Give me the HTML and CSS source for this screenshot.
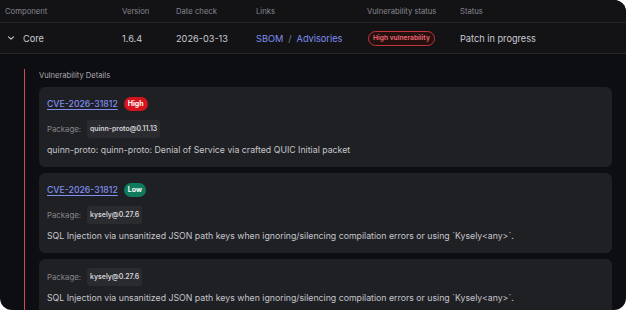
FILE: index.html
```html
<!DOCTYPE html>
<html lang="en">
<head>
  <meta charset="UTF-8">
  <title>Components</title>
  <link rel="stylesheet" href="styles.css">
</head>
<body>
  <section class="frame">
    <div class="grid head">
      <div>Component</div>
      <div>Version</div>
      <div>Date check</div>
      <div>Links</div>
      <div>Vulnerability status</div>
      <div>Status</div>
    </div>

    <div class="grid row">
      <div class="name">
        <svg class="chev" width="8" height="8" viewBox="0 0 8 8"><path d="M1.5 2.8 4 5.2 6.5 2.8" fill="none" stroke="#c9c9cf" stroke-width="1.1" stroke-linecap="round" stroke-linejoin="round"/></svg>
        Core
      </div>
      <div>1.6.4</div>
      <div>2026-03-13</div>
      <div class="links"><a>SBOM</a><span class="sep">/</span><a>Advisories</a></div>
      <div><span class="pill">High vulnerability</span></div>
      <div>Patch in progress</div>
    </div>

    <div class="details">
      <div class="details-inner">
        <div class="details-title">Vulnerability Details</div>

        <div class="card">
          <div class="cve-line">
            <a class="cve">CVE-2026-31812</a>
            <span class="badge high">High</span>
          </div>
          <div class="pkg"><span class="pkg-label">Package:</span><span class="chip">quinn-proto@0.11.13</span></div>
          <p class="desc">quinn-proto: quinn-proto: Denial of Service via crafted QUIC Initial packet</p>
        </div>

        <div class="card">
          <div class="cve-line">
            <a class="cve">CVE-2026-31812</a>
            <span class="badge low">Low</span>
          </div>
          <div class="pkg"><span class="pkg-label">Package:</span><span class="chip">kysely@0.27.6</span></div>
          <p class="desc">SQL Injection via unsanitized JSON path keys when ignoring/silencing compilation errors or using `Kysely&lt;any&gt;`.</p>
        </div>

        <div class="card no-cve">
          <div class="pkg"><span class="pkg-label">Package:</span><span class="chip">kysely@0.27.6</span></div>
          <p class="desc">SQL Injection via unsanitized JSON path keys when ignoring/silencing compilation errors or using `Kysely&lt;any&gt;`.</p>
        </div>
      </div>
    </div>
  </section>
</body>
</html>
```

FILE: styles.css
```css
* {
  padding: 0;
  margin: 0;
  box-sizing: border-box;
}

body {
  background: #ffffff;
  font-family: 'Inter', 'Noto Sans', sans-serif;
}

.frame {
  width: 626px;
  height: 310px;
  overflow: hidden;
  background: #0d0e11;
  border-radius: 0 12px 12px 12px;
}

.grid {
  display: grid;
  grid-template-columns: 117px 54px 80px 111px 93px 1fr;
  padding-left: 5px;
  align-items: center;
  background: #131316;
  border-bottom: 1px solid #26272b;
}

.head {
  height: 23px;
  font-size: 7.7px;
  color: #85858c;
}

.row {
  height: 31px;
  font-size: 9.2px;
  color: #cacad0;
}

.name {
  display: flex;
  align-items: center;
  gap: 8px;
  padding-left: 2px;
}

.links a {
  color: #7f8ef0;
}

.links .sep {
  color: #7a7a82;
  margin: 0 5px;
}

.pill {
  display: inline-block;
  border: 1px solid #c2343e;
  border-radius: 8px;
  background: #24100f;
  color: #f06a72;
  font-size: 6.7px;
  font-weight: 600;
  padding: 2px 4px;
  margin-left: 1px;
  line-height: 9px;
}

.details {
  padding: 15px 14px 0 24px;
}

.details-inner {
  border-left: 1px solid #d9465a;
  padding-left: 14px;
  height: 260px;
}

.details-title {
  font-size: 7.6px;
  color: #a9a9b0;
  line-height: 14px;
  margin-bottom: 4px;
}

.card {
  background: #1f2023;
  border-radius: 6px;
  padding: 10px 8px 11px;
  margin-bottom: 6px;
  height: 80px;
}

.card.no-cve {
  padding-top: 9px;
}

.cve-line {
  display: flex;
  align-items: center;
  gap: 6px;
  height: 14px;
  margin-bottom: 9px;
}

.cve {
  font-size: 8.7px;
  font-weight: 500;
  color: #7f8ef0;
  text-decoration: underline;
  text-underline-offset: 2px;
}

.badge {
  font-size: 7px;
  font-weight: 700;
  color: #ffffff;
  border-radius: 7px;
  padding: 2px 4px;
  line-height: 10px;
}

.badge.high {
  background: #d4141d;
}

.badge.low {
  background: #0f7a5c;
}

.pkg {
  display: flex;
  align-items: center;
  gap: 6px;
  height: 18px;
  margin-bottom: 6px;
}

.pkg-label {
  font-size: 7.8px;
  color: #85858c;
}

.chip {
  background: #2a2b2f;
  border-radius: 3px;
  padding: 0 3px;
  line-height: 18px;
  font-size: 6.9px;
  font-weight: 600;
  color: #d4d4d9;
}

.desc {
  font-size: 8.75px;
  color: #c6c6cc;
  line-height: 12px;
}
```
